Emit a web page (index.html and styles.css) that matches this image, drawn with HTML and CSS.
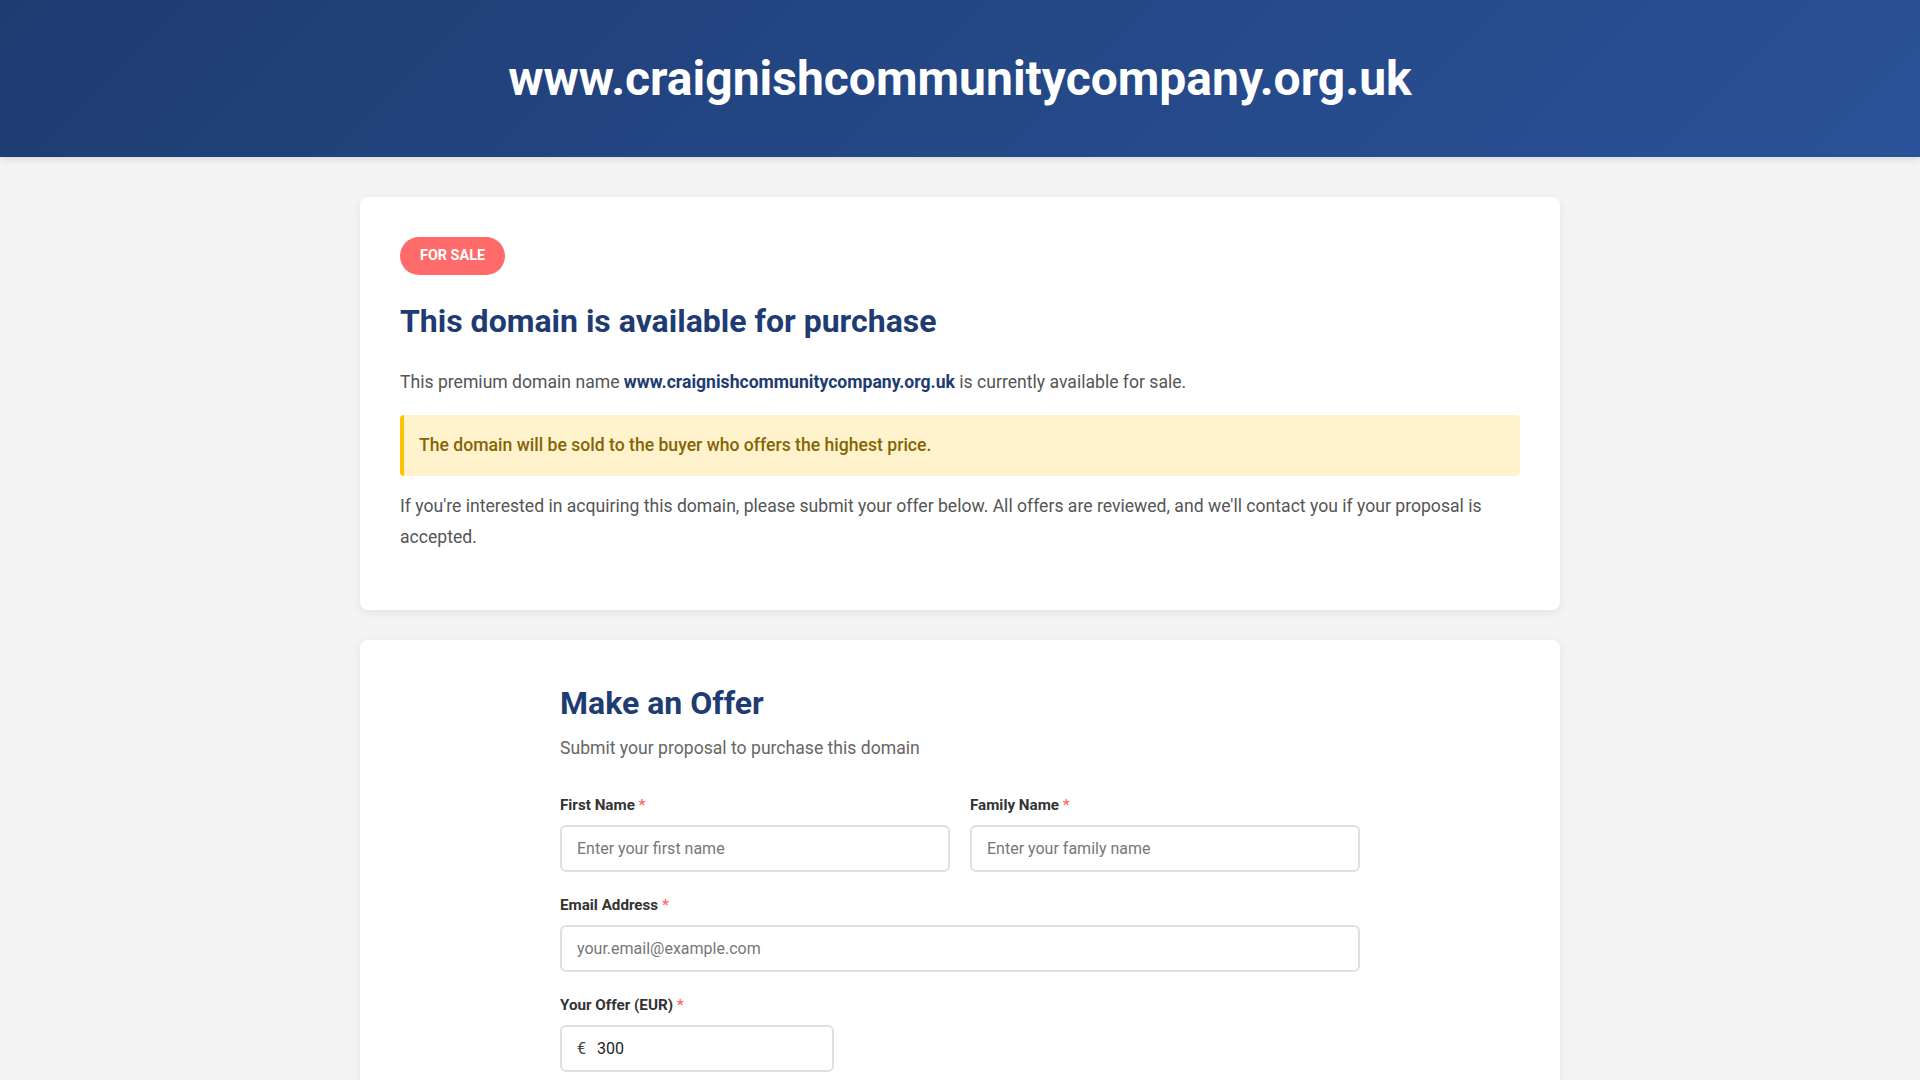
FILE: index.html
```html
<!DOCTYPE html>
<html lang="en">
<head>
<meta charset="utf-8">
<title>www.craignishcommunitycompany.org.uk - Domain For Sale</title>
<link rel="stylesheet" href="styles.css">
</head>
<body>
<header class="site-header">
  <h1 class="site-title">www.craignishcommunitycompany.org.uk</h1>
</header>
<main class="container">
  <section class="card">
    <span class="badge">FOR SALE</span>
    <h2 class="card-title">This domain is available for purchase</h2>
    <p class="text">This premium domain name <strong class="domain">www.craignishcommunitycompany.org.uk</strong> is currently available for sale.</p>
    <div class="notice">The domain will be sold to the buyer who offers the highest price.</div>
    <p class="text">If you're interested in acquiring this domain, please submit your offer below. All offers are reviewed, and we'll contact you if your proposal is accepted.</p>
  </section>
  <section class="card">
    <form class="offer-form">
      <h2 class="card-title form-title">Make an Offer</h2>
      <p class="form-subtitle">Submit your proposal to purchase this domain</p>
      <div class="form-row">
        <div class="form-group">
          <label class="label" for="first">First Name <span class="req">*</span></label>
          <input class="input" id="first" type="text" placeholder="Enter your first name">
        </div>
        <div class="form-group">
          <label class="label" for="family">Family Name <span class="req">*</span></label>
          <input class="input" id="family" type="text" placeholder="Enter your family name">
        </div>
      </div>
      <div class="form-group">
        <label class="label" for="email">Email Address <span class="req">*</span></label>
        <input class="input" id="email" type="email" placeholder="your.email@example.com">
      </div>
      <div class="form-group">
        <label class="label" for="offer">Your Offer (EUR) <span class="req">*</span></label>
        <div class="money">
          <span class="currency">€</span>
          <input class="money-input" id="offer" type="text" value="300">
        </div>
      </div>
      <div class="form-group">
        <label class="label" for="msg">Message</label>
        <textarea class="input textarea" id="msg" placeholder="Add a message (optional)"></textarea>
      </div>
      <button class="submit" type="button">Submit Offer</button>
    </form>
  </section>
</main>
</body>
</html>
```

FILE: styles.css
```css
* { box-sizing: border-box; }

body {
  margin: 0;
  background: #f4f4f4;
  font-family: Roboto, "Liberation Sans", Arial, sans-serif;
  color: #555;
}

.site-header {
  background: linear-gradient(135deg, #1e3c72 0%, #2a5298 100%);
  padding: 48px 20px;
  text-align: center;
  box-shadow: 0 2px 8px rgba(0, 0, 0, 0.12);
}

.site-title {
  margin: 0;
  color: #fff;
  font-size: 48px;
  font-weight: 700;
  line-height: 61px;
}

.container {
  max-width: 1200px;
  margin: 40px auto;
}

.card {
  background: #fff;
  border-radius: 8px;
  padding: 40px;
  margin-bottom: 30px;
  box-shadow: 0 2px 10px rgba(0, 0, 0, 0.08);
}

.badge {
  display: inline-block;
  background: #ff6b6b;
  color: #fff;
  font-size: 14.4px;
  font-weight: 700;
  line-height: 22px;
  padding: 8px 20px;
  border-radius: 25px;
}

.card-title {
  margin: 27px 0 26.5px;
  color: #1e3c72;
  font-size: 32px;
  font-weight: 700;
  line-height: 38.4px;
}

.text {
  margin: 0 0 16px;
  font-size: 17.6px;
  line-height: 1.8;
  color: #555;
}

.domain {
  color: #1e3c72;
  font-weight: 700;
}

.notice {
  margin: 15px 0 15px;
  background: #fff3cd;
  border-left: 4px solid #ffc107;
  border-radius: 4px;
  padding: 16px 15px;
  color: #856404;
  font-size: 17.6px;
  font-weight: 500;
  line-height: 29px;
}

.offer-form {
  max-width: 800px;
  margin: 0 auto;
}

.form-title {
  margin: 4px 0 11px;
}

.form-subtitle {
  margin: 0 0 28px;
  font-size: 17.6px;
  line-height: 31.7px;
  color: #666;
}

.form-row {
  display: grid;
  grid-template-columns: 1fr 1fr;
  gap: 20px;
}

.form-group {
  margin-bottom: 21px;
}

.label {
  display: block;
  margin-bottom: 8px;
  font-size: 15.2px;
  font-weight: 700;
  line-height: 24px;
  color: #333;
}

.req { color: #ff6b6b; }

.input {
  display: block;
  width: 100%;
  padding: 12px 15px;
  border: 2px solid #e0e0e0;
  border-radius: 6px;
  font-family: Roboto, "Liberation Sans", Arial, sans-serif;
  font-size: 16px;
  line-height: 19px;
  color: #333;
  background: #fff;
}

.input::placeholder { color: #777; }

.textarea {
  height: 120px;
  resize: vertical;
}

.money {
  display: flex;
  align-items: center;
  width: 274px;
  border: 2px solid #e0e0e0;
  border-radius: 6px;
  padding: 0 15px;
  background: #fff;
}

.currency {
  color: #444;
  font-size: 16px;
  margin-right: 11px;
}

.money-input {
  flex: 1;
  min-width: 0;
  border: none;
  outline: none;
  padding: 12px 0;
  font-family: Roboto, "Liberation Sans", Arial, sans-serif;
  font-size: 16px;
  line-height: 19px;
  color: #222;
  background: transparent;
}

.submit {
  display: block;
  width: 100%;
  padding: 16px;
  border: none;
  border-radius: 6px;
  background: linear-gradient(135deg, #1e3c72 0%, #2a5298 100%);
  color: #fff;
  font-family: Roboto, "Liberation Sans", Arial, sans-serif;
  font-size: 17.6px;
  font-weight: 700;
}
```
